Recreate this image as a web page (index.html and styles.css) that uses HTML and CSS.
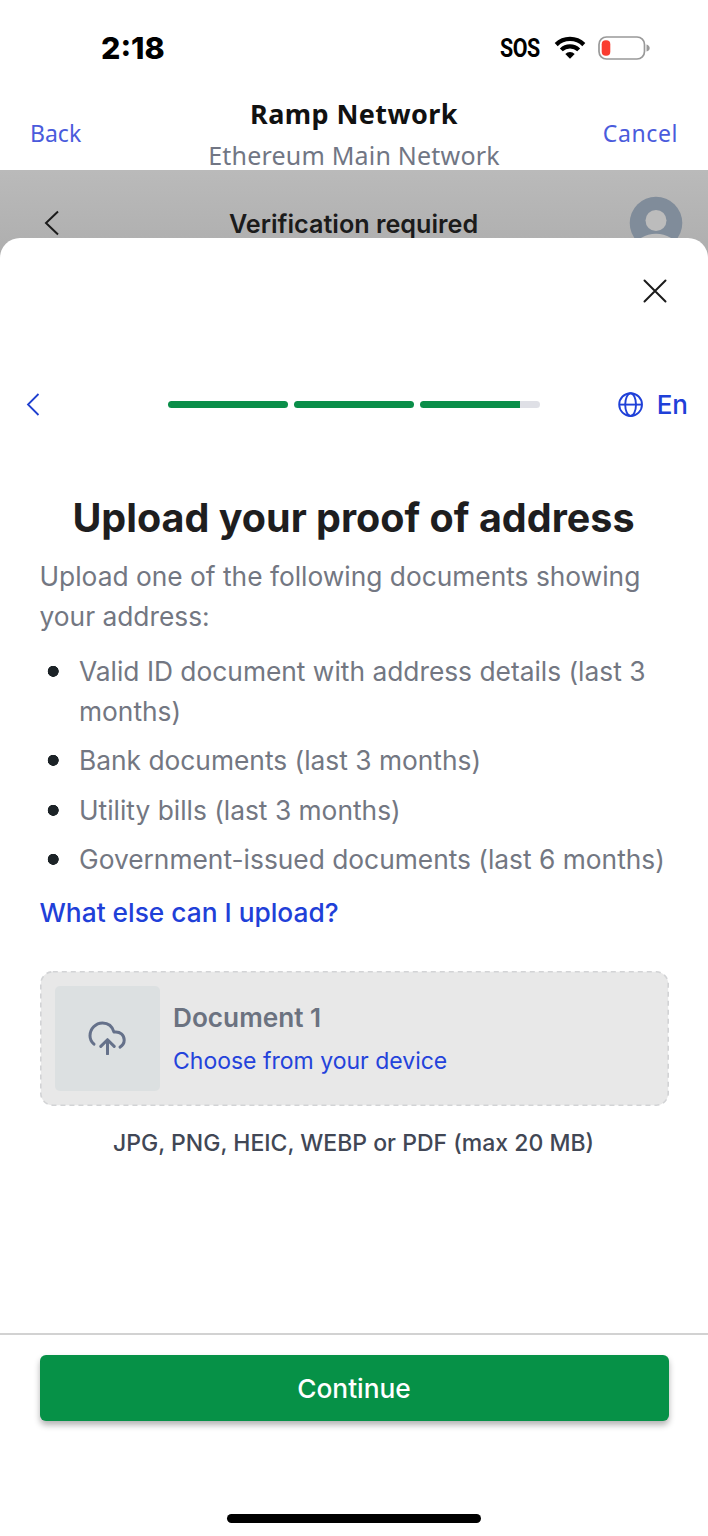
FILE: index.html
```html
<!DOCTYPE html>
<html lang="en">
<head>
<meta charset="utf-8">
<title>Ramp Network</title>
<link rel="stylesheet" href="styles.css">
</head>
<body>
<div class="screen">
  <div class="status">
    <span class="time">2:18</span>
    <div class="signals">
      <span class="sos">SOS</span>
      <svg class="wifi" viewBox="0 0 32 24" width="32" height="24">
        <path d="M2.2 8.6a19.6 19.6 0 0 1 27.6 0" fill="none" stroke="#000" stroke-width="4.3"/>
        <path d="M7.3 13.9a12.4 12.4 0 0 1 17.4 0" fill="none" stroke="#000" stroke-width="4.1"/>
        <path d="M11.3 18a6.7 6.7 0 0 1 9.4 0L16 22.8z"/>
      </svg>
      <svg class="battery" viewBox="0 0 52 24" width="52" height="24">
        <rect x="1" y="1" width="45.5" height="22" rx="7.5" fill="none" stroke="#999" stroke-width="1.7"/>
        <rect x="3.7" y="4.2" width="8.6" height="15.6" rx="4" fill="#fa3c30"/>
        <path d="M48.5 8.4q3.2 1 3.2 3.6t-3.2 3.6z" fill="#999"/>
      </svg>
    </div>
  </div>
  <header class="nav">
    <a class="nav-link">Back</a>
    <div class="nav-title">
      <div class="name">Ramp Network</div>
      <div class="network">Ethereum Main Network</div>
    </div>
    <a class="nav-link cancel">Cancel</a>
  </header>
  <div class="backdrop">
    <svg class="back-dim" viewBox="0 0 16 26" width="16" height="26"><path d="M14 1.5 2 13 14 24.5" fill="none" stroke="#1b1b1b" stroke-width="2"/></svg>
    <span class="verify">Verification required</span>
    <svg class="avatar" viewBox="0 0 54 54" width="54" height="54">
      <circle cx="27" cy="27" r="26.3" fill="#808c9a"/>
      <circle cx="27" cy="24.5" r="10.5" fill="#bcbcbc"/>
      <ellipse cx="27" cy="51" rx="20" ry="13.3" fill="#bcbcbc"/>
    </svg>
  </div>
  <main class="sheet">
    <div class="close-row">
      <svg viewBox="0 0 24 24" width="24" height="24"><path d="M1.5 1.5l21 21M22.5 1.5l-21 21" fill="none" stroke="#1b1b1b" stroke-width="2" stroke-linecap="round"/></svg>
    </div>
    <div class="steps-row">
      <svg class="back" viewBox="0 0 14 24" width="14" height="24"><path d="M12.5 1 2 11.5 12.5 22" fill="none" stroke="#1f3fcf" stroke-width="1.8"/></svg>
      <div class="steps"><i class="step"></i><i class="step"></i><i class="step partial"></i></div>
      <div class="lang">
        <svg viewBox="0 0 26 26" width="26" height="26" fill="none" stroke="#1f40d8" stroke-width="1.9"><circle cx="12.6" cy="12.6" r="11.4"/><ellipse cx="12.6" cy="12.6" rx="5.4" ry="11.4"/><path d="M1.2 12.6H24"/></svg>
        <span class="code">En</span>
      </div>
    </div>
    <h1 class="title">Upload your proof of address</h1>
    <section class="content">
      <p class="intro">Upload one of the following documents showing your address:</p>
      <ul class="docs">
        <li class="wide">Valid ID document with address details (last 3 months)</li>
        <li>Bank documents (last 3 months)</li>
        <li>Utility bills (last 3 months)</li>
        <li>Government-issued documents (last 6 months)</li>
      </ul>
      <a class="more">What else can I upload?</a>
      <div class="upload">
        <svg class="outline" width="629" height="135"><rect x=".8" y=".8" width="627.4" height="133.4" rx="12" fill="#e8e8e8" stroke="#d2d3d5" stroke-width="1.6" stroke-dasharray="5 4"/></svg>
        <div class="thumb">
          <svg viewBox="0 0 38 34" width="38" height="34" fill="none" stroke="#65718a" stroke-width="3" stroke-linecap="round" stroke-linejoin="round"><path d="M6 23.2C3.5 21 2 18 2 14.7 2 7.9 7.6 2 14.5 2c5.5 0 9.8 3.3 11.5 9.1 6.3-.9 10.2 2.9 10.2 8 0 3-1.5 5.500-4.200 7"/><path d="M19.5 33V18.7M12.8 25.4l6.7-6.7 6.7 6.7"/></svg>
        </div>
        <div class="upload-text">
          <div class="doc-name">Document 1</div>
          <a class="choose">Choose from your device</a>
        </div>
      </div>
      <p class="formats">JPG, PNG, HEIC, WEBP or PDF (max 20 MB)</p>
    </section>
    <footer class="footer">
      <button class="continue">Continue</button>
      <div class="home"></div>
    </footer>
  </main>
</div>
</body>
</html>
```
FILE: styles.css
```css
* { box-sizing: border-box; }
body { margin: 0; background: #fff; font-family: Inter, "Liberation Sans", sans-serif; }
h1, p, ul { margin: 0; padding: 0; }
svg { display: block; flex: none; }
.screen { width: 708px; height: 1536px; overflow: hidden; display: flex; flex-direction: column; background: #fff; }
.status { height: 96px; display: flex; justify-content: space-between; padding: 0 58px 0 101px; flex: none; }
.time { font-size: 30.4px; font-weight: 800; line-height: 97px; color: #000; }
.signals { display: flex; align-items: center; height: 96px; }
.sos { width: 39px; font-family: Roboto, sans-serif; font-weight: 700; font-size: 25.5px; letter-spacing: -.5px; line-height: 101px; margin-right: 15px; transform: scaleX(.84); transform-origin: left; }
.battery { margin-left: 12px; }
.nav { height: 74px; flex: none; display: grid; grid-template-columns: 150px 1fr 150px; padding: 0 30px; font-family: "Noto Sans", sans-serif; }
.nav-link { font-size: 23px; line-height: 74px; color: #4a5bdc; }
.cancel { text-align: right; letter-spacing: .6px; }
.nav-title { text-align: center; white-space: nowrap; }
.name { font-size: 27px; font-weight: 700; line-height: 36px; color: #111; letter-spacing: .42px; }
.network { font-size: 25px; line-height: 36px; padding-top: 5px; color: #717684; letter-spacing: .2px; }
.backdrop { height: 94px; margin-bottom: -26px; flex: none; display: grid; grid-template-columns: 120px 1fr 120px; padding: 0 25px 0 44px; background: linear-gradient(#bababa, #adadad); }
.back-dim { margin-top: 40px; }
.verify { text-align: center; padding-right: 20px; font-size: 25.2px; font-weight: 600; line-height: 108px; color: #1b1b1b; white-space: nowrap; }
.avatar { margin-top: 26px; justify-self: end; }
.sheet { position: relative; flex: 1; display: flex; flex-direction: column; background: #fff; border-radius: 20px 20px 0 0; }
.close-row { height: 106px; display: flex; justify-content: flex-end; align-items: center; padding-right: 41px; flex: none; }
.steps-row { height: 121px; flex: none; display: grid; grid-template-columns: 142px 372px 1fr; align-items: center; padding: 0 20px 0 26px; }
.steps { display: flex; gap: 6px; }
.step { flex: 1; height: 7px; border-radius: 4px; background: #0a8e49; }
.partial { background: linear-gradient(90deg, #0a8e49 83%, #dfe0e6 83%); }
.lang { display: flex; align-items: center; justify-content: flex-end; gap: 13px; color: #1f40d8; }
.code { font-size: 26px; font-weight: 500; line-height: 40px; padding-top: 1px; }
.title { font-size: 39.5px; font-weight: 700; line-height: 50px; margin-top: 28px; padding-right: 1px; text-align: center; color: #1e1e1f; white-space: nowrap; }
.content { padding: 14px 39.5px 0; }
.intro, .docs { font-size: 26.33px; line-height: 39.5px; color: #737782; }
.docs { list-style: none; margin-top: 16px; display: flex; flex-direction: column; gap: 10px; }
.docs li { padding-left: 39.5px; white-space: nowrap; background: radial-gradient(circle 5.8px at 13.2px 19.3px, #1c2327 90%, transparent 100%); }
.docs .wide { white-space: normal; }
.more { display: block; margin-top: 13px; font-size: 26.3px; font-weight: 500; line-height: 40px; color: #1f40d8; }
.upload { position: relative; height: 135px; margin-top: 38px; display: flex; align-items: center; padding-left: 15px; gap: 13.5px; }
.outline { position: absolute; inset: 0; }
.thumb { position: relative; width: 105px; height: 105px; border-radius: 5px; background: #dce0e1; display: grid; place-items: center; padding-right: 1px; }
.upload-text { position: relative; }
.doc-name { font-size: 26.2px; font-weight: 600; line-height: 40px; color: #6b7280; }
.choose { display: block; font-size: 23px; line-height: 36px; padding-top: 5px; color: #2443db; }
.formats { margin-top: 20px; padding-right: 1px; text-align: center; font-size: 23px; font-weight: 500; line-height: 34px; color: #414755; white-space: nowrap; }
.footer { margin-top: auto; height: 203px; border-top: 2px solid #d2d2d2; padding: 20px 39.5px 0; display: flex; flex-direction: column; align-items: center; flex: none; }
.continue { width: 629px; height: 66px; border: 0; border-radius: 6px; background: #069147; box-shadow: 0 4px 6px rgba(0,0,0,.3); color: #fff; font: 500 26.3px Inter, sans-serif; flex: none; }
.home { width: 254px; height: 9px; border-radius: 5px; background: #000; margin-top: 93px; }
```
